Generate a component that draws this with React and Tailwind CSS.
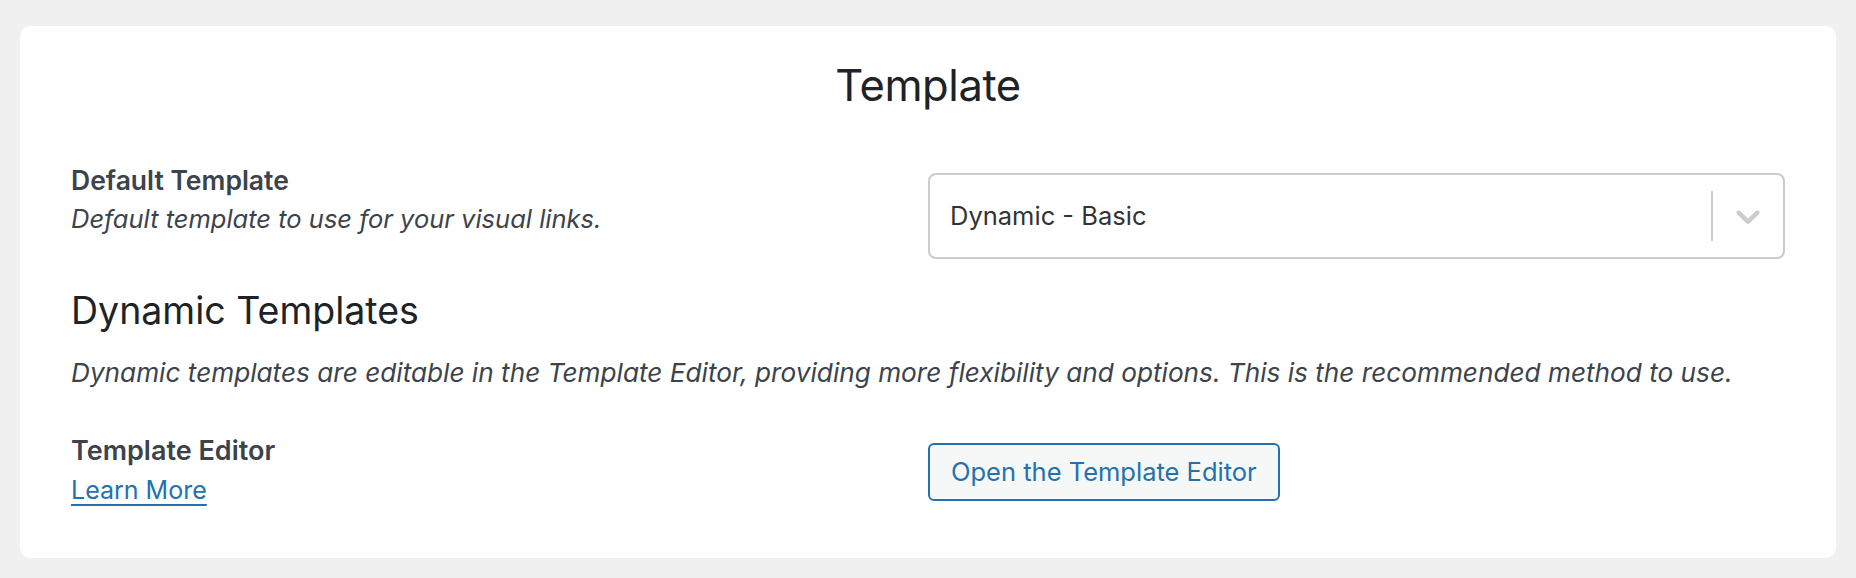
import { useState } from "react";

const ChevronDown = () => (
  <svg width="40" height="40" viewBox="0 0 20 20" aria-hidden="true" fill="#cccccc">
    <path d="M4.516 7.548c0.436-0.446 1.043-0.481 1.576 0l3.908 3.747 3.908-3.747c0.533-0.481 1.141-0.446 1.574 0 0.436 0.445 0.408 1.197 0 1.615-0.406 0.418-4.695 4.502-4.695 4.502-0.217 0.223-0.502 0.335-0.787 0.335s-0.57-0.112-0.789-0.335c0 0-4.287-4.084-4.695-4.502s-0.436-1.17 0-1.615z" />
  </svg>
);

const TemplateSelect = ({ value }) => (
  <div className="flex items-center h-[86px] w-full bg-white border-2 border-[#cccccc] rounded-[8px] cursor-default">
    <div className="flex-1 pl-[20px] text-[25.5px] text-[#333333] truncate">{value}</div>
    <span className="self-stretch my-[16px] w-[2px] bg-[#cccccc]"></span>
    <div className="px-[15px] flex items-center">
      <ChevronDown />
    </div>
  </div>
);

const App = () => {
  const [template] = useState("Dynamic - Basic");

  return (
    <div
      className="min-h-screen bg-[#f0f0f1] pt-[26px] pb-[22px] px-[20px]"
      style={{ fontFamily: "Inter, 'Noto Sans', 'Liberation Sans', sans-serif" }}
    >
      <div className="bg-white rounded-[10px] px-[51px] pt-[33px] pb-[50px]">
        <h1 className="text-center text-[43.5px] leading-[52px] text-[#1d2327] tracking-[-0.01em]">
          Template
        </h1>

        {/* default template row */}
        <div className="grid grid-cols-2 mt-[51px]">
          <div>
            <div className="text-[26.5px] leading-[36px] font-semibold text-[#3c434a]">
              Default Template
            </div>
            <p className="mt-[3px] text-[25.5px] leading-[36px] italic text-[#3c434a]">
              Default template to use for your visual links.
            </p>
          </div>
          <div className="mt-[11px]">
            <TemplateSelect value={template} />
          </div>
        </div>

        <h2 className="mt-[30px] text-[37.5px] leading-[44px] text-[#1d2327]">
          Dynamic Templates
        </h2>
        <p className="mt-[22px] text-[26.2px] leading-[36px] italic text-[#3c434a]">
          Dynamic templates are editable in the Template Editor, providing more flexibility and options. This is the recommended method to use.
        </p>

        {/* editor row */}
        <div className="grid grid-cols-2 mt-[42px]">
          <div>
            <div className="text-[27px] leading-[36px] font-semibold text-[#3c434a]">
              Template Editor
            </div>
            <a
              href="#"
              className="block mt-[3px] text-[25px] leading-[36px] text-[#2271b1] underline underline-offset-[5px] decoration-[2px] w-fit"
            >
              Learn More
            </a>
          </div>
          <div className="mt-[10px]">
            <button className="h-[58px] px-[21px] border-2 border-[#2271b1] rounded-[6px] bg-[#f6f7f7] text-[25.5px] text-[#2271b1]">
              Open the Template Editor
            </button>
          </div>
        </div>
      </div>
    </div>
  );
};

export default App;
